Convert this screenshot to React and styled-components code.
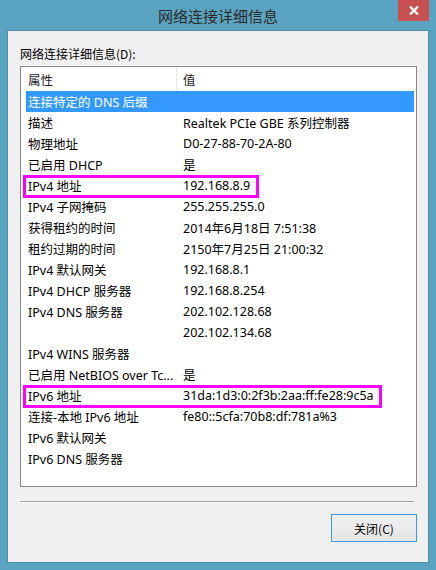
import React from "react";
import styled, { createGlobalStyle } from "styled-components";

const Global = createGlobalStyle`
  html, body {
    margin: 0;
    padding: 0;
    background: #5aa3c1;
  }
  body {
    font-family: "Noto Sans", "Noto Sans CJK SC", sans-serif;
    font-size: 12px;
    color: #000;
  }
`;

const Window = styled.div`
  width: 436px;
  height: 570px;
  background: #5aa3c1;
  display: flex;
  flex-direction: column;
  box-sizing: border-box;
  padding: 0 7px 7px 7px;
`;

const TitleBar = styled.div`
  position: relative;
  height: 30px;
  flex: none;
  display: flex;
  align-items: center;
  justify-content: center;
  font-family: "Noto Sans CJK SC", sans-serif;
  font-size: 15px;
  color: #2b2b2b;
  padding-top: 1px;
  box-sizing: border-box;
`;

const CloseBox = styled.div`
  position: absolute;
  right: 0;
  top: 0;
  width: 31px;
  height: 21px;
  background: #c75050;
  display: flex;
  align-items: center;
  justify-content: center;
`;

const Panel = styled.div`
  flex: 1;
  background: #f0f0f0;
  border: 1px solid #4d8fac;
  display: flex;
  flex-direction: column;
  padding: 14px 11px 0 12px;
`;

const Label = styled.div`
  font-family: "Noto Sans CJK SC", sans-serif;
  font-size: 12px;
  height: 21px;
  line-height: 17px;
`;

const ListBox = styled.div`
  background: #fff;
  border: 1px solid #828790;
  height: 419px;
  display: flex;
  flex-direction: column;
  padding: 0 2px 0 5px;
  font-size: 12.5px;
`;

const Header = styled.div`
  display: flex;
  height: 24px;
  align-items: center;
  flex: none;
`;

const HeadCell = styled.div`
  width: ${(p) => p.w}px;
  height: 100%;
  display: flex;
  align-items: center;
  padding-left: ${(p) => p.pl}px;
  box-sizing: border-box;
  border-right: ${(p) => (p.sep ? "1px solid #e5e5e5" : "none")};
  color: #1e1e1e;
`;

const Row = styled.div`
  position: relative;
  display: flex;
  height: 21px;
  align-items: center;
  flex: none;
  background: ${(p) => (p.selected ? "#3399ff" : "transparent")};
  color: ${(p) => (p.selected ? "#fff" : "#000")};
`;

const Cell = styled.div`
  width: ${(p) => p.w}px;
  padding-left: ${(p) => p.pl}px;
  box-sizing: border-box;
  white-space: nowrap;
  overflow: hidden;
`;

const Mark = styled.div`
  position: absolute;
  left: -3px;
  top: 0;
  width: ${(p) => p.w}px;
  height: 23px;
  border: 3px solid #ff00ff;
  box-sizing: border-box;
  pointer-events: none;
`;

const Divider = styled.div`
  margin: 14px 3px 0 0;
  height: 1px;
  background: #a0a0a0;
  border-bottom: 1px solid #fff;
`;

const Footer = styled.div`
  display: flex;
  justify-content: flex-end;
  padding-top: 11px;
`;

const Button = styled.button`
  width: 86px;
  height: 28px;
  border: 1px solid #3c9bf0;
  background: linear-gradient(#f0f0f0, #e5e5e5);
  font-family: "Noto Sans CJK SC", sans-serif;
  font-size: 12px;
  color: #000;
  padding: 0;
  margin: 0;
`;

const rows = [
  { k: "连接特定的 DNS 后缀", v: "", selected: true },
  { k: "描述", v: "Realtek PCIe GBE 系列控制器" },
  { k: "物理地址", v: "D0-27-88-70-2A-80" },
  { k: "已启用 DHCP", v: "是" },
  { k: "IPv4 地址", v: "192.168.8.9", mark: 236 },
  { k: "IPv4 子网掩码", v: "255.255.255.0" },
  { k: "获得租约的时间", v: "2014年6月18日 7:51:38" },
  { k: "租约过期的时间", v: "2150年7月25日 21:00:32" },
  { k: "IPv4 默认网关", v: "192.168.8.1" },
  { k: "IPv4 DHCP 服务器", v: "192.168.8.254" },
  { k: "IPv4 DNS 服务器", v: "202.102.128.68" },
  { k: "", v: "202.102.134.68" },
  { k: "IPv4 WINS 服务器", v: "" },
  { k: "已启用 NetBIOS over Tc...", v: "是" },
  { k: "IPv6 地址", v: "31da:1d3:0:2f3b:2aa:ff:fe28:9c5a", mark: 359 },
  { k: "连接-本地 IPv6 地址", v: "fe80::5cfa:70b8:df:781a%3" },
  { k: "IPv6 默认网关", v: "" },
  { k: "IPv6 DNS 服务器", v: "" },
];

export default function App() {
  return (
    <>
      <Global />
      <Window>
        <TitleBar>
          网络连接详细信息
          <CloseBox>
            <svg width="10" height="9" viewBox="0 0 10 9">
              <path d="M1 0.5 L9 8.5 M9 0.5 L1 8.5" stroke="#fff" strokeWidth="2.2" />
            </svg>
          </CloseBox>
        </TitleBar>
        <Panel>
          <Label>网络连接详细信息(D):</Label>
          <ListBox>
            <Header>
              <HeadCell w={151} pl={2} sep>属性</HeadCell>
              <HeadCell w={200} pl={6}>值</HeadCell>
            </Header>
            {rows.map((r, i) => (
              <Row key={i} selected={r.selected}>
                <Cell w={157} pl={2}>{r.k}</Cell>
                <Cell w={230} pl={0}>{r.v}</Cell>
                {r.mark && <Mark w={r.mark} />}
              </Row>
            ))}
          </ListBox>
          <Divider />
          <Footer>
            <Button>关闭(C)</Button>
          </Footer>
        </Panel>
      </Window>
    </>
  );
}
